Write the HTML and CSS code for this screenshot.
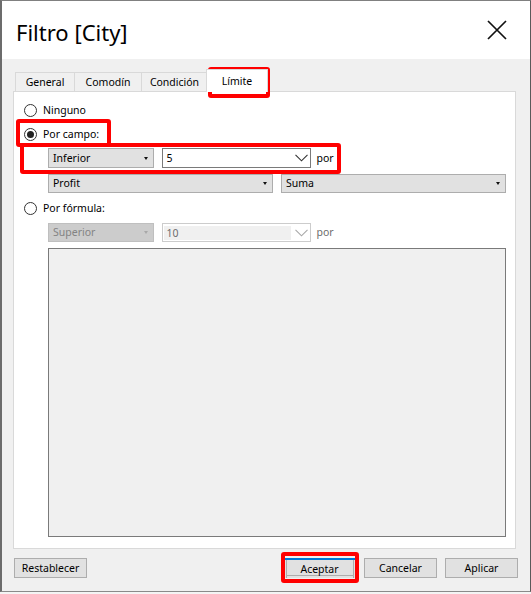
FILE: index.html
```html
<!DOCTYPE html>
<html lang="es">
<head>
<meta charset="utf-8">
<title>Filtro [City]</title>
<link rel="stylesheet" href="styles.css">
</head>
<body>
<div class="window">
  <header class="titlebar">
    <h1 class="title">Filtro [City]</h1>
    <button class="close" aria-label="Cerrar">
      <svg width="20" height="20" viewBox="0 0 20 20"><path d="M1 1 L19 19 M19 1 L1 19" stroke="#111" stroke-width="1.7" fill="none"/></svg>
    </button>
  </header>
  <main class="content">
    <div class="tabs">
      <div class="tab t-general">General</div>
      <div class="tab t-comodin">Comodín</div>
      <div class="tab t-condicion">Condición</div>
      <div class="tab t-limite active">Límite</div>
    </div>
    <section class="panel">
      <div class="radio-row r-ninguno"><span class="radio"></span><span>Ninguno</span></div>
      <div class="radio-row r-campo"><span class="radio checked"></span><span>Por campo:</span></div>
      <div class="field-row row-inferior">
        <div class="select s-small"><span>Inferior</span><i class="arrow"></i></div>
        <div class="combo"><span class="combo-text">5</span><svg class="chev" width="13" height="8" viewBox="0 0 13 8"><path d="M0.5 0.8 L6.5 6.8 L12.5 0.8" stroke="#333" stroke-width="1.1" fill="none"/></svg></div>
        <span class="por">por</span>
      </div>
      <div class="field-row row-profit">
        <div class="select s-wide"><span>Profit</span><i class="arrow"></i></div>
        <div class="select s-wide"><span>Suma</span><i class="arrow"></i></div>
      </div>
      <div class="radio-row r-formula"><span class="radio"></span><span>Por fórmula:</span></div>
      <div class="field-row row-superior disabled">
        <div class="select s-small"><span>Superior</span><i class="arrow"></i></div>
        <div class="combo"><span class="combo-text">10</span><svg class="chev" width="13" height="8" viewBox="0 0 13 8"><path d="M0.5 0.8 L6.5 6.8 L12.5 0.8" stroke="#a8a8a8" stroke-width="1.1" fill="none"/></svg></div>
        <span class="por">por</span>
      </div>
      <div class="formula-box"></div>
    </section>
    <footer class="buttons">
      <button class="btn">Restablecer</button>
      <button class="btn default">Aceptar</button>
      <button class="btn">Cancelar</button>
      <button class="btn">Aplicar</button>
    </footer>
  </main>
</div>
<div class="mark m-limite"></div>
<div class="mark m-campo"></div>
<div class="mark m-row"></div>
<div class="mark m-aceptar"></div>
</body>
</html>
```

FILE: styles.css
```css
* { box-sizing: border-box; }

body {
  margin: 0;
  width: 531px;
  height: 594px;
  overflow: hidden;
  position: relative;
  background: #f4f4f4;
  font-family: "Noto Sans", "Open Sans", sans-serif;
  font-size: 10.5px;
  color: #000;
}

.window {
  width: 531px;
  height: 592px;
  border-top: 1px solid #808080;
  border-left: 2px solid #6c6c6c;
  border-right: 1px solid #5a5a5a;
  border-bottom: 1px solid #8a8a8a;
  background: #f0f0f0;
  display: flex;
  flex-direction: column;
}

.titlebar {
  height: 58px;
  flex: none;
  background: #fff;
  display: flex;
  align-items: flex-start;
  padding-left: 14px;
}

.title {
  margin: 15.5px 0 0 0;
  font-size: 22px;
  font-weight: 400;
  line-height: 30px;
}

.close {
  margin: 19px 23px 0 auto;
  width: 20px;
  height: 20px;
  padding: 0;
  border: 0;
  background: none;
  display: block;
}
.close svg { display: block; }

.content {
  flex: 1;
  display: flex;
  flex-direction: column;
  padding: 13px 12px 0 11px;
}

.tabs {
  display: flex;
  align-items: flex-end;
  height: 19px;
  margin-left: 2px;
  position: relative;
  z-index: 1;
}

.tab {
  height: 19px;
  border: 1px solid #d9d9d9;
  border-bottom: none;
  background: #f0f0f0;
  text-align: center;
  line-height: 17px;
  padding-top: 1px;
  white-space: nowrap;
}
.tab + .tab { margin-left: -1px; }
.t-general { width: 60px; }
.t-comodin { width: 68px; }
.t-condicion { width: 67px; }
.t-limite { width: 62px; }

.tab.active {
  background: #fff;
  height: 23px;
  margin-bottom: -1px;
  margin-left: -2px;
  padding-top: 3px;
}

.panel {
  background: #fff;
  border: 1px solid #d9d9d9;
  margin-right: 2px;
  padding: 0 0 11px 0;
  display: flex;
  flex-direction: column;
}

.radio-row {
  display: flex;
  align-items: center;
  height: 16px;
  line-height: 16px;
}
.r-ninguno { margin-top: 10px; }
.r-campo { margin-top: 8px; }
.r-formula { margin-top: 7px; }

.radio {
  width: 13px;
  height: 13px;
  border: 1px solid #333;
  border-radius: 50%;
  background: #fff;
  margin-left: 9.5px;
  margin-right: 6.5px;
  position: relative;
  flex: none;
}
.radio.checked::after {
  content: "";
  position: absolute;
  left: 2px;
  top: 2px;
  width: 7px;
  height: 7px;
  border-radius: 50%;
  background: #222;
}

.field-row {
  display: flex;
  align-items: center;
  margin-left: 34px;
}
.row-inferior { margin-top: 6px; height: 20px; }
.row-profit { margin-top: 6px; height: 19px; gap: 8px; }
.row-superior { margin-top: 7px; height: 19px; }

.select {
  height: 100%;
  border: 1px solid #adadad;
  background: #e1e1e1;
  display: flex;
  align-items: center;
  padding-left: 4px;
  line-height: 17px;
}
.s-small { width: 106px; }
.s-wide { width: 225px; }

.arrow {
  margin-left: auto;
  margin-right: 5px;
  width: 0;
  height: 0;
  border-left: 2.5px solid transparent;
  border-right: 2.5px solid transparent;
  border-top: 3px solid #111;
}

.combo {
  width: 149px;
  height: 100%;
  margin-left: 7.5px;
  border: 1px solid #7a7a7a;
  background: #fff;
  display: flex;
  align-items: center;
  line-height: 17px;
}
.combo-text {
  flex: 1;
  padding-left: 4px;
}
.chev {
  display: block;
  margin: 0 2px 0 4px;
}

.por {
  margin-left: 6px;
  line-height: 17px;
}

.disabled .select {
  background: #cccccc;
  border-color: #bfbfbf;
  color: #838383;
}
.disabled .arrow { border-top-color: #a8a8a8; }
.disabled .combo { border-color: #cccccc; }
.disabled .combo-text {
  background: #f0f0f0;
  color: #6d6d6d;
  margin: 0 0 0 1px;
  padding-left: 3px;
  height: 14px;
  line-height: 14px;
}
.disabled .por { color: #6d6d6d; }

.formula-box {
  margin: 6px 0 0 34px;
  width: 458px;
  height: 289px;
  background: #f0f0f0;
  border: 1px solid #7a7a7a;
}

.buttons {
  display: flex;
  gap: 8px;
  margin-top: 9px;
  margin-left: 1px;
}

.btn {
  width: 73px;
  height: 20px;
  padding: 0;
  border: 1px solid #adadad;
  background: #e1e1e1;
  font: inherit;
  color: #000;
  line-height: 18px;
}
.btn.default {
  margin-left: auto;
  border: none;
  border-top: 2px solid #0078d7;
  line-height: 17px;
  box-shadow:
    inset 3px 0 #e1e1e1,
    inset 4px 0 #adadad,
    inset -2px 0 #e1e1e1,
    inset -3px 0 #adadad,
    inset 0 -2px #e1e1e1,
    inset 0 -3px #adadad;
}

.mark {
  position: absolute;
  border: 4px solid #ff0000;
  border-radius: 3px;
  pointer-events: none;
}
.m-limite { left: 208px; top: 67px; width: 62px; height: 31px; }
.m-campo { left: 16px; top: 119px; width: 95px; height: 28px; }
.m-row { left: 20px; top: 143px; width: 321px; height: 31px; }
.m-aceptar { left: 281px; top: 552px; width: 78px; height: 31px; }
```
